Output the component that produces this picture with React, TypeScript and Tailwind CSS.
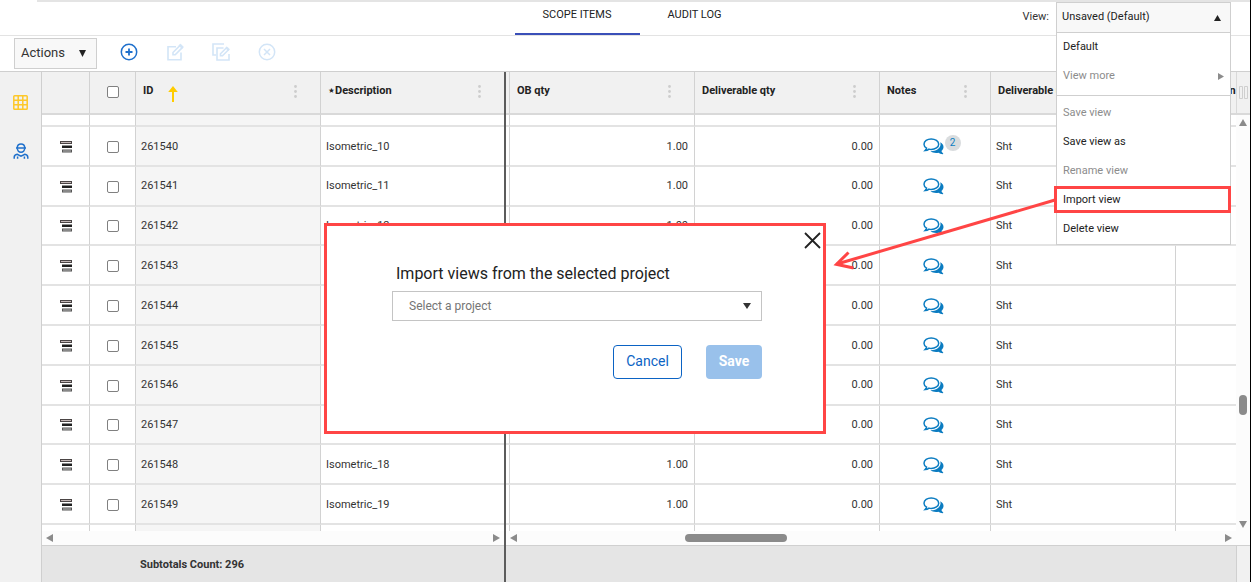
import React from "react";

const gridLine = "border-r border-r-[#d2d2d2]";
const rowLine = "border-b-2 border-b-[#e3e3e3]";
const headCell = "h-[43px] border-b-2 border-b-[#d9d9d9] bg-[#f1f1f1] p-0 pb-0.5";
const bodyCell = "p-0 pt-0.5";
const checkbox = "mx-auto block size-3 appearance-none rounded-xs border border-[#808080] bg-white";

const ids = [261540, 261541, 261542, 261543, 261544, 261545, 261546, 261547, 261548, 261549];

const LevelIcon = () => (
  <svg width="12" height="12" viewBox="0 0 12 12" className="mx-auto" aria-hidden="true">
    <rect x="0.5" y="0.5" width="11" height="2" fill="#c4b8b8" stroke="#4a4444" />
    <rect x="2" y="4.5" width="10" height="2.5" fill="#1f1f1f" />
    <rect x="2.5" y="9" width="9" height="2" fill="#bbb" stroke="#555" />
  </svg>
);

const NotesIcon = () => (
  <svg width="21" height="17" viewBox="0 0 21 17" aria-hidden="true">
    <path d="M17.2 4.2c2.3 1.3 3.5 3 3.3 5-.1 1.5-.9 2.8-2.1 3.8.3 1 .9 1.7 1.8 2.600.2.300 0 .6-.4.600-1.800-.1-3.200-.6-4.400-1.500-2.800.5-6 .1-8-1.400 5.200.2 9.600-2.300 10.100-6.200.1-1 0-2-.3-2.900z" fill="#0b7cc1" />
    <path d="M8.2 1C4.3 1 1 3.2 1 6.2c0 1.7 1 3.1 2.6 4-.2.9-.8 1.7-1.5 2.4 1.5-.1 2.8-.6 3.9-1.5.7.2 1.5.3 2.2.3 4 0 7.5-2.200 7.500-5.200S12.200 1 8.200 1z" fill="white" stroke="#0b7cc1" strokeWidth="1.5" />
  </svg>
);

const Kebab = () => (
  <svg width="3" height="13" viewBox="0 0 3 13" fill="#cdcdcd" aria-hidden="true">
    <circle cx="1.5" cy="1.5" r="1.4" />
    <circle cx="1.5" cy="6.5" r="1.4" />
    <circle cx="1.5" cy="11.5" r="1.4" />
  </svg>
);

const points = {
  up: "0,8 4,0 8,8",
  down: "0,0 8,0 4,8",
  left: "8,0 8,8 0,4",
  right: "0,0 8,4 0,8",
};

const Triangle = ({ dir, className }: { dir: keyof typeof points; className: string }) => (
  <svg viewBox="0 0 8 8" preserveAspectRatio="none" className={className} fill="currentColor" aria-hidden="true">
    <polygon points={points[dir]} />
  </svg>
);

const HeadCell = ({ title, last }: { title: string; last?: boolean }) => (
  <th className={`${headCell} pl-[7px] ${last ? "" : gridLine}`}>
    <div className="flex items-center justify-between overflow-hidden pr-[23px] whitespace-nowrap">
      <span>{title}</span>
      <Kebab />
    </div>
  </th>
);

const Header = () => (
  <header className="grid h-9 shrink-0 grid-cols-[1fr_auto_1fr] border-b border-[#e3e3e3] pl-3.5">
    <div className="ml-[23px] h-0.5 bg-[#e4e4e4]"></div>
    <nav className="flex border-t-2 border-[#e4e4e4] text-[11px] text-[#222]">
      <a href="#scope" className="flex w-[125px] items-center justify-center border-b-2 border-[#3a4fb8] pb-1">SCOPE ITEMS</a>
      <a href="#audit" className="flex w-[110px] items-center justify-center pb-1.5">AUDIT LOG</a>
    </nav>
    <div className="flex items-start justify-end border-t-2 border-[#e4e4e4] pr-[19px]">
      <label htmlFor="view" className="pt-[7px] pr-[7px] text-[11px]">View:</label>
      <div className="relative w-[175px]">
        <select id="view" className="block h-[31px] w-full appearance-none border border-[#cfcfcf] bg-[#f8f8f8] pl-[5px] text-[11px] text-[#222]">
          <option>Unsaved (Default)</option>
        </select>
        <Triangle dir="up" className="pointer-events-none absolute top-[13px] right-2.5 h-1.5 w-[7px] text-[#222]" />
        <ViewMenu />
      </div>
    </div>
  </header>
);

const ViewMenu = () => {
  const item = "block h-[29px] w-full px-1.5 text-left";
  return (
    <div className="absolute top-full right-0 left-0 z-10 border border-t-0 border-[#cfcfcf] bg-white text-[11px] text-[#222]">
      <button type="button" className={item}>Default</button>
      <button type="button" disabled className={`${item} text-[#8c8c8c]`}>
        <span className="flex items-center justify-between">
          View more
          <Triangle dir="right" className="h-[7px] w-1.5" />
        </span>
      </button>
      <div className="mt-1 border-t border-[#cfcfcf] pt-[3px]">
        <button type="button" disabled className={`${item} text-[#8c8c8c]`}>Save view</button>
        <button type="button" className={item}>Save view as</button>
        <button type="button" disabled className={`${item} text-[#8c8c8c]`}>Rename view</button>
        <div className="relative">
          <button type="button" className={item}>Import view</button>
          <div className="pointer-events-none absolute top-0 -right-px bottom-0.5 -left-[3px] border-3 border-[#ff4545]"></div>
        </div>
        <button type="button" className={item}>Delete view</button>
      </div>
    </div>
  );
};

const Toolbar = () => (
  <div className="flex h-9 shrink-0 items-center border-b border-[#cfcfcf] pl-3.5">
    <button type="button" className="flex h-[31px] w-[83px] items-center justify-between border border-[#cfcfcf] bg-[#f8f8f8] pr-2.5 pb-0.5 pl-1.5 text-[13px] text-[#333]">
      Actions
      <Triangle dir="down" className="mt-0.5 h-[7px] w-[7px] text-[#222]" />
    </button>
    <div className="ml-[23px] flex items-center gap-7 pb-[3px] text-[#d3e5f7]">
      <button type="button" aria-label="Add" className="text-[#1f70cc]">
        <svg width="18" height="18" viewBox="0 0 18 18" fill="none" stroke="currentColor" strokeWidth="1.5">
          <circle cx="9" cy="9" r="7.7" />
          <path d="M9 5.5v7M5.5 9h7" strokeWidth="1.8" />
        </svg>
      </button>
      <button type="button" disabled aria-label="Edit">
        <svg width="18" height="18" viewBox="0 0 18 18" fill="none" stroke="currentColor" strokeWidth="1.6">
          <path d="M10 3.8H2v13h13V9.5" />
          <path d="M7 9.5l7.3-7.3 2.2 2.2-7.3 7.3H7z" />
          <path d="M12.8 2.5l1.7-1.500 2.800 2.800-1.500 1.700z" fill="currentColor" strokeWidth="0.5" />
        </svg>
      </button>
      <button type="button" disabled aria-label="Copy and edit">
        <svg width="18" height="18" viewBox="0 0 18 18" fill="none" stroke="currentColor" strokeWidth="1.6">
          <path d="M12 1H1v11h3" />
          <path d="M11.5 5H5v12h12v-6" />
          <path d="M8.5 10.8l6-6 2 2-6 6h-2z" />
          <path d="M13.5 5l1.5-1.300 2.500 2.500-1.300 1.500z" fill="currentColor" strokeWidth="0.5" />
        </svg>
      </button>
      <button type="button" disabled aria-label="Remove">
        <svg width="18" height="18" viewBox="0 0 18 18" fill="none" stroke="currentColor" strokeWidth="1.5">
          <circle cx="9" cy="9" r="7.7" />
          <path d="M6 6l6 6M12 6l-6 6" />
        </svg>
      </button>
    </div>
  </div>
);

const Sidebar = () => (
  <aside className="flex w-[42px] shrink-0 flex-col items-center gap-[33px] border-r border-[#cfcfcf] bg-[#f1f1f1] pt-[23px]">
    <button type="button" aria-label="Grid">
      <svg width="15" height="15" viewBox="0 0 15 15" fill="none" stroke="#fdc829" strokeWidth="1.5">
        <rect x="0.8" y="0.8" width="13.4" height="13.4" rx="0.8" />
        <path d="M5.2 1v13M9.8 1v13M1 5.2h13M1 9.8h13" />
      </svg>
    </button>
    <button type="button" aria-label="Workers">
      <svg width="16" height="16" viewBox="0 0 16 16" fill="none" stroke="#1f70cc" strokeWidth="1.5">
        <path d="M4.2 4.7C4.4 2.3 5.9 1 8 1s3.6 1.3 3.8 3.7M3 4.9h10" />
        <path d="M4.3 5.2C4.5 7.5 6 9.2 8 9.2s3.5-1.7 3.7-4" />
        <path d="M1.2 15.8v-1.6c0-1.6 1.3-2.7 3-2.9L8 13.2l3.8-1.9c1.7.2 3 1.3 3 2.9v1.6M4.6 13.500v2.300M11.400 13.500v2.300" />
      </svg>
    </button>
  </aside>
);

const FrozenTable = () => (
  <table className="h-full w-full table-fixed border-separate border-spacing-0 text-left text-[11px]">
    <colgroup>
      <col className="w-12" />
      <col className="w-[46px]" />
      <col className="w-[185px]" />
      <col />
    </colgroup>
    <thead className="text-[#222]">
      <tr>
        <th className={`${headCell} ${gridLine}`}></th>
        <th className={`${headCell} ${gridLine}`}>
          <input type="checkbox" aria-label="Select all" className={checkbox} />
        </th>
        <th className={`${headCell} pl-[7px] ${gridLine}`}>
          <div className="flex h-4 items-center pr-[23px]">
            <span>ID</span>
            <svg width="10" height="16" viewBox="0 0 10 16" className="mt-1 ml-[15px]" fill="#fc0" aria-hidden="true">
              <path d="M5 0l4.8 6H6v10H4V6H.2z" />
            </svg>
            <span className="ml-auto"><Kebab /></span>
          </div>
        </th>
        <HeadCell title="⋆Description" last />
      </tr>
    </thead>
    <tbody>
      <tr className="h-3">
        <td className={`p-0 ${gridLine} ${rowLine}`}></td>
        <td className={`p-0 ${gridLine} ${rowLine}`}></td>
        <td className={`bg-[#f5f5f5] p-0 ${gridLine} ${rowLine}`}></td>
        <td className={`p-0 ${rowLine}`}></td>
      </tr>
      {ids.map((id) => (
        <tr key={id}>
          <td className={`${bodyCell} ${gridLine} ${rowLine}`}><LevelIcon /></td>
          <td className={`${bodyCell} ${gridLine} ${rowLine}`}>
            <input type="checkbox" aria-label={`Select ${id}`} className={checkbox} />
          </td>
          <td className={`bg-[#f5f5f5] ${bodyCell} pl-[5px] ${gridLine} ${rowLine}`}>{id}</td>
          <td className={`${bodyCell} pl-[5px] ${rowLine}`}>Isometric_{id - 261530}</td>
        </tr>
      ))}
      <tr className="h-1.5">
        <td className={`p-0 ${gridLine}`}></td>
        <td className={`p-0 ${gridLine}`}></td>
        <td className={`bg-[#f5f5f5] p-0 ${gridLine}`}></td>
        <td className="p-0"></td>
      </tr>
    </tbody>
  </table>
);

const ScrollTable = () => (
  <table className="h-full w-full table-fixed border-separate border-spacing-0 text-left text-[11px]">
    <colgroup>
      <col className="w-1" />
      <col className="w-[185px]" />
      <col className="w-[185px]" />
      <col className="w-[111px]" />
      <col className="w-[185px]" />
      <col />
    </colgroup>
    <thead className="text-[#222]">
      <tr>
        <th className={`${headCell} ${gridLine}`}></th>
        <HeadCell title="OB qty" />
        <HeadCell title="Deliverable qty" />
        <HeadCell title="Notes" />
        <HeadCell title="Deliverable unit" />
        <th className={`${headCell} pl-[3px]`}>
          <div className="overflow-hidden">Description</div>
        </th>
      </tr>
    </thead>
    <tbody>
      <tr className="h-3">
        <td className={`p-0 ${gridLine} ${rowLine}`}></td>
        <td className={`p-0 ${gridLine} ${rowLine}`}></td>
        <td className={`p-0 ${gridLine} ${rowLine}`}></td>
        <td className={`p-0 ${gridLine} ${rowLine}`}></td>
        <td className={`p-0 ${gridLine} ${rowLine}`}></td>
        <td className={`p-0 ${rowLine}`}></td>
      </tr>
      {ids.map((id, i) => (
        <tr key={id}>
          <td className={`${bodyCell} ${gridLine} ${rowLine}`}></td>
          <td className={`${bodyCell} pr-1.5 text-right ${gridLine} ${rowLine}`}>1.00</td>
          <td className={`${bodyCell} pr-1.5 text-right ${gridLine} ${rowLine}`}>0.00</td>
          <td className={`${bodyCell} pr-1 ${gridLine} ${rowLine}`}>
            <button type="button" aria-label="Notes" className="relative mx-auto block">
              <NotesIcon />
              {i === 0 && (
                <span className="absolute -top-[3px] left-[22px] grid size-4 place-items-center rounded-full bg-[#d9dcde] text-[10px] leading-none text-[#0b7cc1]">2</span>
              )}
            </button>
          </td>
          <td className={`${bodyCell} pl-[5px] ${gridLine} ${rowLine}`}>Sht</td>
          <td className={`${bodyCell} ${rowLine}`}></td>
        </tr>
      ))}
      <tr className="h-1.5">
        <td className={`p-0 ${gridLine}`}></td>
        <td className={`p-0 ${gridLine}`}></td>
        <td className={`p-0 ${gridLine}`}></td>
        <td className={`p-0 ${gridLine}`}></td>
        <td className={`p-0 ${gridLine}`}></td>
        <td className="p-0"></td>
      </tr>
    </tbody>
  </table>
);

const HorizontalBar = ({ children }: { children?: React.ReactNode }) => (
  <div className="flex h-[15px] shrink-0 items-center justify-between border-b border-[#d0d0d0] bg-[#fcfcfc] px-1 text-[#8b8b8b]">
    <Triangle dir="left" className="h-2 w-[7px]" />
    {children}
    <Triangle dir="right" className="h-2 w-[7px]" />
  </div>
);

const Grid = () => (
  <main className="flex min-w-0 grow">
    <section className="flex w-[462px] shrink-0 flex-col">
      <div className="min-h-0 grow">
        <FrozenTable />
      </div>
      <HorizontalBar />
      <div className="flex h-9 shrink-0 items-center bg-[#e5e5e5] pt-0.5 pl-[98px] text-[11px] font-bold">Subtotals Count: 296</div>
    </section>
    <section className="flex min-w-0 grow flex-col border-l-2 border-[#5c5c5c]">
      <div className="min-h-0 grow overflow-hidden">
        <ScrollTable />
      </div>
      <HorizontalBar>
        <div className="flex grow">
          <div className="w-[168px]"></div>
          <div className="h-2 w-[102px] rounded-full bg-[#8b8b8b]"></div>
        </div>
      </HorizontalBar>
      <div className="h-9 shrink-0 bg-[#e5e5e5]"></div>
    </section>
    <div className="flex w-3.5 shrink-0 flex-col text-[#8b8b8b]">
      <div className="flex h-[43px] items-center justify-center border-b-2 border-l border-[#d9d9d9] bg-[#f1f1f1]">
        <svg width="9" height="13" viewBox="0 0 9 13" fill="none" stroke="#cfcfcf" aria-hidden="true">
          <path d="M.5.5h3v12h-3zM5.5.5h3v12h-3z" />
        </svg>
      </div>
      <div className="flex grow flex-col items-center bg-[#fcfcfc] pt-1">
        <Triangle dir="up" className="h-[7px] w-2" />
        <div className="basis-[269px]"></div>
        <div className="h-5 w-2 rounded-full bg-[#8b8b8b]"></div>
        <Triangle dir="down" className="mt-auto mb-[3px] h-[7px] w-2" />
      </div>
      <div className="h-[15px] border-b border-[#d0d0d0] bg-[#fcfcfc]"></div>
      <div className="h-9 border-l border-[#d0d0d0] bg-[#f1f1f1]"></div>
    </div>
  </main>
);

const ImportDialog = () => (
  <div role="dialog" aria-label="Import views" className="absolute top-[223px] left-[324px] z-20 h-[211px] w-[502px] border-3 border-[#ff4545] bg-white pt-9 pr-[61px] pl-[65px]">
    <button type="button" aria-label="Close" className="absolute top-1.5 right-0.5">
      <svg width="17" height="17" viewBox="0 0 17 17" stroke="#222" strokeWidth="1.8" aria-hidden="true">
        <path d="M1 1l15 15M16 1L1 16" />
      </svg>
    </button>
    <label htmlFor="project" className="block pl-1 text-base text-[#222]">Import views from the selected project</label>
    <div className="relative mt-[5px]">
      <select id="project" className="block h-[30px] w-full appearance-none border border-[#c4c4c4] bg-white pl-4 text-xs text-[#757575]">
        <option>Select a project</option>
      </select>
      <Triangle dir="down" className="pointer-events-none absolute top-3 right-[11px] h-1.5 w-2 text-[#333]" />
    </div>
    <div className="mt-6 flex justify-end gap-6 text-sm">
      <button type="button" className="h-[34px] w-[69px] rounded-sm border border-[#0b63c4] pb-0.5 text-[#0b63c4]">Cancel</button>
      <button type="button" disabled className="h-[34px] w-14 rounded-sm bg-[#99c1eb] pb-0.5 font-bold text-white">Save</button>
    </div>
  </div>
);

// pointer from the Import view item to the dialog
const Arrow = () => (
  <svg width="224" height="76" viewBox="0 0 224 76" className="pointer-events-none absolute top-[197px] left-[832px] z-20" fill="none" stroke="#ff4545" strokeWidth="3" aria-hidden="true">
    <path d="M223 3L5 67" />
    <path d="M16.5 55.5L4.5 67.3L21.5 71" />
  </svg>
);

export default function App() {
  return (
    <div className="relative flex h-screen flex-col overflow-hidden border-r border-black bg-white font-['Roboto',sans-serif] text-[#333]">
      <Header />
      <Toolbar />
      <div className="flex min-h-0 grow">
        <Sidebar />
        <Grid />
      </div>
      <ImportDialog />
      <Arrow />
    </div>
  );
}
